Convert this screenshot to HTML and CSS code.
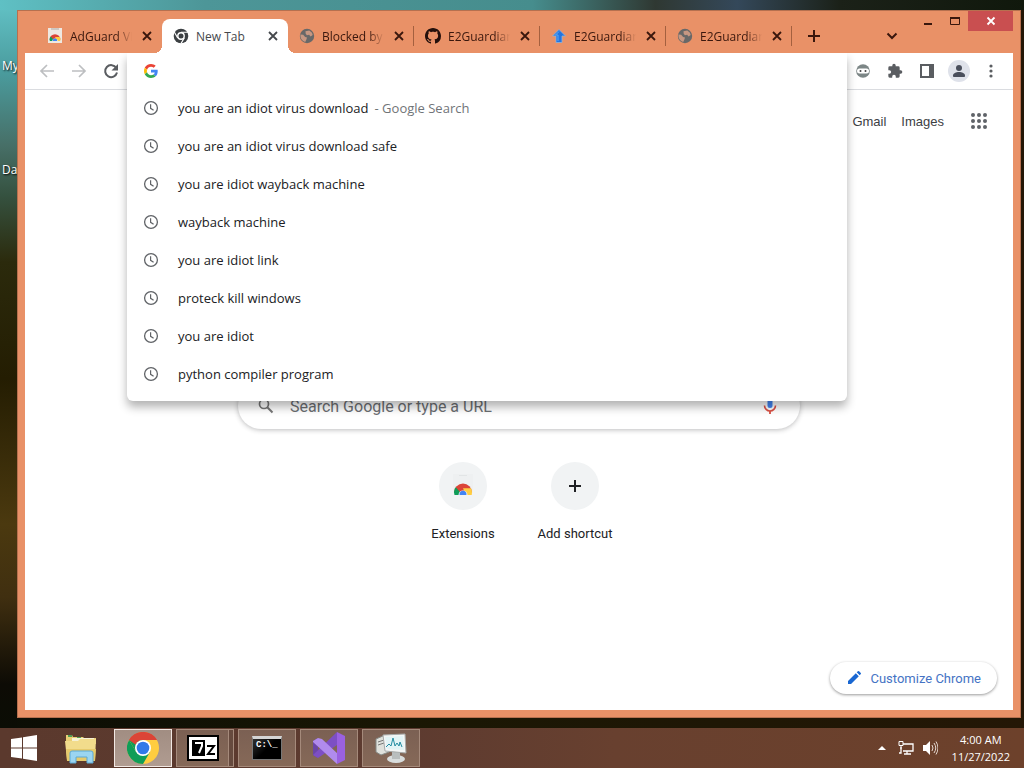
FILE: index.html
```html
<!DOCTYPE html>
<html lang="en">
<head>
  <meta charset="UTF-8" />
  <meta name="viewport" content="width=device-width, initial-scale=1" />
  <title>New Tab</title>
  <link rel="stylesheet" href="styles.css">
</head>
<body>
  <!-- Shared icons -->
  <svg class="sprite" aria-hidden="true">
    <symbol id="i-close" viewBox="0 0 16 16"><path d="M4 4l8 8M12 4l-8 8" fill="none" stroke="currentColor" stroke-width="1.8"/></symbol>
    <symbol id="i-plus" viewBox="0 0 16 16"><path d="M8 2v12M2 8h12" fill="none" stroke="currentColor" stroke-width="2"/></symbol>
    <symbol id="i-clock" viewBox="0 0 16 16"><circle cx="8" cy="8" r="6.4" fill="none" stroke="currentColor" stroke-width="1.3"/><path d="M7.6 4.2v4.1l3 1.9" fill="none" stroke="currentColor" stroke-width="1.2"/></symbol>
    <symbol id="i-globe" viewBox="0 0 16 16"><circle cx="8" cy="8" r="7.2" fill="#686868"/><path d="M1.500 6.500l2.700.3 1.900 2.200 1.900.4-.6 2.100-1.200 2.500C3.500 13.200 1 10.500 1.500 6.500zM6.500 3.200l3.800-.8 2.700 2.400.7 2.300-2.100 1.500-1.500-1.800-2.200.4-1.200-1.500z" fill="#c79782"/></symbol>
    <symbol id="i-store" viewBox="0 0 20 20"><path d="M1 13.500a9 9 0 0 1 18 0l-4.500 1.500h-9z" fill="#db4437"/><path d="M1 13.500c0-2 .7-3.800 1.800-5.200L7 13v3H1.500z" fill="#0f9d58"/><path d="M10 9.300h8c.7 1.300 1 2.700 1 4.200l-.3 2.500H13z" fill="#ffcd40"/><path d="M5.500 16a4.500 4.500 0 1 1 9 0z" fill="#f1f1f1"/><path d="M6.600 16a3.500 3.500 0 1 1 6.800 0z" fill="#4285f4"/></symbol>
    <symbol id="i-github" viewBox="0 0 16 16"><path fill="#24100c" d="M8 0C3.580 0 0 3.580 0 8c0 3.540 2.290 6.530 5.470 7.590.4.070.55-.17.55-.38 0-.19-.01-.82-.01-1.490-2.010.37-2.530-.49-2.690-.94-.09-.23-.48-.94-.82-1.130-.28-.15-.68-.52-.01-.53.63-.01 1.080.58 1.230.82.72 1.210 1.870.87 2.330.66.07-.52.28-.87.51-1.070-1.780-.2-3.640-.89-3.640-3.950 0-.87.31-1.590.82-2.150-.08-.2-.36-1.020.08-2.120 0 0 .67-.21 2.200.82.64-.18 1.320-.27 2-.27s1.360.09 2 .27c1.530-1.040 2.200-.82 2.200-.82.44 1.100.16 1.920.08 2.120.51.56.82 1.270.82 2.150 0 3.070-1.870 3.750-3.650 3.950.29.25.54.73.54 1.480 0 1.070-.01 1.930-.01 2.200 0 .21.15.46.55.38A8.010 8.010 0 0 0 16 8c0-4.420-3.580-8-8-8z"/></symbol>
  </svg>

  <main class="desktop">
    <span class="desktop-label desktop-label-pc">My</span>
    <span class="desktop-label desktop-label-da">Da</span>

    <div class="window">
      <header class="titlebar">
        <div class="tabs">
          <div class="tab no-line">
            <svg class="favicon" viewBox="0 0 16 16"><path d="M1 0h14v15H1z" fill="#eee8e2"/><path d="M4 0h8v2H4z" fill="#cfc8c2"/><use href="#i-store" x="2" y="3" width="12" height="13"/></svg>
            <button class="tab-title">AdGuard VPN</button>
            <button class="tab-close" aria-label="Close AdGuard VPN"><svg><use href="#i-close"/></svg></button>
          </div>
          <div class="tab active">
            <svg class="favicon" viewBox="0 0 16 16"><circle cx="8" cy="8" r="7.300" fill="#3c4043"/><path d="M8 4.200h7M4.700 9.900L1.300 3.900M11.300 9.900l-3.500 6" stroke="#fff" stroke-width="1.100"/><circle cx="8" cy="8" r="3.900" fill="#fff"/><circle cx="8" cy="8" r="2.500" fill="#3c4043"/></svg>
            <button class="tab-title">New Tab</button>
            <button class="tab-close" aria-label="Close New Tab"><svg><use href="#i-close"/></svg></button>
          </div>
          <div class="tab">
            <svg class="favicon"><use href="#i-globe"/></svg>
            <button class="tab-title">Blocked by</button>
            <button class="tab-close" aria-label="Close Blocked by"><svg><use href="#i-close"/></svg></button>
          </div>
          <div class="tab">
            <svg class="favicon"><use href="#i-github"/></svg>
            <button class="tab-title">E2Guardian</button>
            <button class="tab-close" aria-label="Close E2Guardian"><svg><use href="#i-close"/></svg></button>
          </div>
          <div class="tab">
            <svg class="favicon" viewBox="0 0 16 16"><path d="M8 1.500L14.500 8H11v6.500H5V8H1.500z" fill="#2374e0" stroke="#8fb4dc" stroke-width=".8"/><path d="M8 3.500L4.500 7H7v6" fill="none" stroke="#5ba8f8"/></svg>
            <button class="tab-title">E2Guardian</button>
            <button class="tab-close" aria-label="Close E2Guardian"><svg><use href="#i-close"/></svg></button>
          </div>
          <div class="tab">
            <svg class="favicon"><use href="#i-globe"/></svg>
            <button class="tab-title">E2Guardian</button>
            <button class="tab-close" aria-label="Close E2Guardian"><svg><use href="#i-close"/></svg></button>
          </div>
        </div>
        <button class="strip-button" aria-label="New tab"><svg><use href="#i-plus"/></svg></button>
        <button class="strip-button tab-search" aria-label="Search tabs"><svg viewBox="0 0 16 16"><path d="M3.500 5.500L8 10l4.500-4.500" fill="none" stroke="currentColor" stroke-width="2"/></svg></button>
        <div class="window-controls">
          <button aria-label="Minimize"><svg viewBox="0 0 12 12"><path d="M2 9h8" stroke="currentColor" stroke-width="2"/></svg></button>
          <button aria-label="Maximize"><svg viewBox="0 0 12 12"><path d="M1.500 2.500h9v7h-9z" fill="none" stroke="currentColor"/><path d="M1 3h10" stroke="currentColor" stroke-width="2"/></svg></button>
          <button class="window-close" aria-label="Close window"><svg viewBox="0 0 12 12"><path d="M2.500 2.500l7 7M9.500 2.500l-7 7" stroke="currentColor" stroke-width="1.800"/></svg></button>
        </div>
      </header>

      <div class="toolbar">
        <div class="nav-buttons">
          <button class="dim" aria-label="Back"><svg viewBox="0 0 16 16"><path d="M15 8H2M8 2L2 8l6 6" fill="none" stroke="currentColor" stroke-width="1.700"/></svg></button>
          <button class="dim" aria-label="Forward"><svg viewBox="0 0 16 16"><path d="M1 8h13M8 2l6 6-6 6" fill="none" stroke="currentColor" stroke-width="1.700"/></svg></button>
          <button aria-label="Reload"><svg viewBox="0 0 16 16"><path d="M13.300 5A6 6 0 1 0 14 9.500" fill="none" stroke="currentColor" stroke-width="2"/><path d="M15 1v6.500H8.500z" fill="currentColor"/></svg></button>
        </div>

        <div class="omnibox">
          <div class="omnibox-popup">
            <div class="omnibox-row">
              <svg class="google-g" viewBox="0 0 48 48"><path fill="#ea4335" d="M24 9.500c3.540 0 6.710 1.220 9.210 3.600l6.850-6.850C35.900 2.380 30.470 0 24 0 14.620 0 6.510 5.380 2.560 13.220l7.980 6.190C12.430 13.720 17.740 9.500 24 9.500z"/><path fill="#4285f4" d="M46.980 24.550c0-1.570-.15-3.090-.38-4.550H24v9.020h12.940c-.58 2.960-2.260 5.480-4.780 7.180l7.730 6c4.510-4.180 7.090-10.360 7.090-17.650z"/><path fill="#fbbc05" d="M10.530 28.590A14.500 14.500 0 0 1 9.770 24c0-1.600.27-3.140.76-4.590l-7.980-6.190A23.900 23.900 0 0 0 0 24c0 3.880.92 7.540 2.560 10.780z"/><path fill="#34a853" d="M24 48c6.480 0 11.930-2.130 15.890-5.810l-7.730-6c-2.150 1.450-4.920 2.300-8.160 2.300-6.260 0-11.570-4.220-13.470-9.910l-7.980 6.190C6.510 42.620 14.620 48 24 48z"/></svg>
              <input type="text" aria-label="Address and search bar">
            </div>
            <ul class="suggestions">
              <li><a href="#"><svg><use href="#i-clock"/></svg><span>you are an idiot virus download</span><span class="hint">- Google Search</span></a></li>
              <li><a href="#"><svg><use href="#i-clock"/></svg><span>you are an idiot virus download safe</span></a></li>
              <li><a href="#"><svg><use href="#i-clock"/></svg><span>you are idiot wayback machine</span></a></li>
              <li><a href="#"><svg><use href="#i-clock"/></svg><span>wayback machine</span></a></li>
              <li><a href="#"><svg><use href="#i-clock"/></svg><span>you are idiot link</span></a></li>
              <li><a href="#"><svg><use href="#i-clock"/></svg><span>proteck kill windows</span></a></li>
              <li><a href="#"><svg><use href="#i-clock"/></svg><span>you are idiot</span></a></li>
              <li><a href="#"><svg><use href="#i-clock"/></svg><span>python compiler program</span></a></li>
            </ul>
          </div>
        </div>

        <div class="toolbar-actions">
          <button aria-label="Ninja extension"><svg viewBox="0 0 16 16"><circle cx="8" cy="8" r="6.800" fill="#7c8686"/><rect x="2" y="5.500" width="12" height="5" rx="2.500" fill="#fff"/><circle cx="5.500" cy="8" r="1" fill="#444"/><circle cx="10.500" cy="8" r="1" fill="#444"/></svg></button>
          <button aria-label="Extensions"><svg viewBox="0 0 24 24"><path fill="currentColor" d="M20.500 11H19V7a2 2 0 0 0-2-2h-4V3.500a2.500 2.500 0 0 0-5 0V5H4a2 2 0 0 0-2 2v3.800h1.500a2.700 2.700 0 0 1 0 5.400H2V20a2 2 0 0 0 2 2h3.800v-1.500a2.700 2.700 0 0 1 5.400 0V22H17a2 2 0 0 0 2-2v-4h1.500a2.500 2.500 0 0 0 0-5z"/></svg></button>
          <button aria-label="Side panel"><svg viewBox="0 0 16 16"><path d="M2 2h12v12H2z" fill="none" stroke="currentColor" stroke-width="2"/><path d="M10 2h4v12h-4z" fill="currentColor"/></svg></button>
          <button class="profile" aria-label="Profile"><svg viewBox="0 0 16 16"><circle cx="8" cy="5" r="3" fill="currentColor"/><path d="M2 14v-1.500c0-2.200 3-3.500 6-3.500s6 1.300 6 3.500V14z" fill="currentColor"/></svg></button>
          <button aria-label="Menu"><svg viewBox="0 0 16 16"><g fill="currentColor"><circle cx="8" cy="3" r="1.600"/><circle cx="8" cy="8" r="1.600"/><circle cx="8" cy="13" r="1.600"/></g></svg></button>
        </div>
      </div>

      <section class="page">
        <nav class="page-nav">
          <a href="#">Gmail</a>
          <a href="#">Images</a>
          <button aria-label="Google apps"><svg viewBox="0 0 18 18"><g fill="#5f6368"><circle cx="3" cy="3" r="2"/><circle cx="9" cy="3" r="2"/><circle cx="15" cy="3" r="2"/><circle cx="3" cy="9" r="2"/><circle cx="9" cy="9" r="2"/><circle cx="15" cy="9" r="2"/><circle cx="3" cy="15" r="2"/><circle cx="9" cy="15" r="2"/><circle cx="15" cy="15" r="2"/></g></svg></button>
        </nav>

        <form class="search">
          <svg viewBox="0 0 16 16"><circle cx="6" cy="6" r="4.500" fill="none" stroke="#777" stroke-width="1.700"/><path d="M9.300 9.300l5.200 5.200" stroke="#777" stroke-width="2"/></svg>
          <input type="text" placeholder="Search Google or type a URL" aria-label="Search Google or type a URL">
          <button type="button" aria-label="Search by voice"><svg viewBox="0 0 16 16"><rect x="5.500" y="0" width="5" height="10" rx="2.500" fill="#4285f4"/><path d="M2.500 7.500a5.500 5.500 0 0 0 11 0" fill="none" stroke="#db5044" stroke-width="1.600"/><path d="M8 13v3" stroke="#db5044" stroke-width="1.800"/></svg></button>
        </form>

        <div class="shortcuts">
          <a class="shortcut" href="#">
            <span class="shortcut-icon"><svg class="store" viewBox="0 0 24 24"><path d="M2 0h20v19H2z" fill="#eef0f1"/><path d="M8 1h8v1H8z" fill="#e2e5e6"/><use href="#i-store" x="2" y="5" width="20" height="20"/></svg></span>
            Extensions
          </a>
          <a class="shortcut" href="#">
            <span class="shortcut-icon"><svg><use href="#i-plus"/></svg></span>
            Add shortcut
          </a>
        </div>

        <button class="customize">
          <svg viewBox="0 0 16 16"><path d="M2 14v-3l7.800-7.800 3 3L5 14zM10.700 2.300l1.200-1.100q.6-.5 1.200 0l1.700 1.700q.5.600 0 1.200l-1.100 1.200z" fill="#1967d2"/></svg>
          Customize Chrome
        </button>
      </section>
    </div>
  </main>

  <footer class="taskbar">
    <button class="start" aria-label="Start"><svg viewBox="0 0 26 26"><path fill="#fff" d="M0 4l11-1.500v10H0zM12 2.300L26 0v12.500H12zM0 13.500h11v10L0 22zM12 13.500h14V26l-14-2.300z"/></svg></button>
    <button class="task plain" aria-label="File Explorer"><svg viewBox="0 0 32 32"><path d="M1 3h6l1 2h10l1 1h12v6H1z" fill="#e9cf76"/><path d="M3 3h4v2H3zM12 5h4v2h-4z" fill="#4f9b54"/><path d="M20 6h5v2h-5z" fill="#c65a49"/><path d="M7 6h22v4H7z" fill="#f6f1d4"/><path d="M0 9h13l2-2h16l-1 21H2z" fill="#f2dc8c"/><path d="M1 17h30l-1 12H2z" fill="#e6ca6c"/><path d="M5 31V21q0-2 2-2h19q2 0 2 2v10h-6v-6H11v6z" fill="#9bd5f1" stroke="#5da9d4"/></svg></button>
    <button class="task current" aria-label="Google Chrome"><svg viewBox="0 0 48 48"><circle cx="24" cy="24" r="24" fill="#ffcd40"/><path d="M24 24L3.200 12A24 24 0 0 1 44.800 12H24z" fill="#db4437"/><path d="M3.200 12A24 24 0 0 0 24 48l10.400-18L24 24 13.600 30z" fill="#0f9d58"/><path d="M3.200 12l10.400 18L24 24V12z" fill="#0f9d58"/><path d="M3.200 12A24 24 0 0 1 44.800 12H24A12 12 0 0 0 13 19z" fill="#db4437"/><circle cx="24" cy="24" r="12" fill="#fff"/><circle cx="24" cy="24" r="9.500" fill="#3079e8"/></svg></button>
    <button class="task stacked" aria-label="7-Zip"><svg viewBox="0 0 32 26"><path d="M1 1h30v24H1z" fill="#fff" stroke="#000" stroke-width="2"/><path d="M5 5h13v16H5z" fill="#000"/><path d="M8 8h7v3l-3 7" fill="none" stroke="#fff" stroke-width="2"/><path d="M20 11h7l-6 8h7" fill="none" stroke="#000" stroke-width="2"/></svg></button>
    <button class="task" aria-label="Command Prompt"><span class="console">C:\_</span></button>
    <button class="task" aria-label="Visual Studio"><svg viewBox="0 0 32 32"><path d="M0 9l5-3v20l-5-3z" fill="#6b46a8"/><path d="M24 0v13L5 26l-5-3z" fill="#7d4fc4"/><path d="M5 6l4 1 17 16-2 9L0 10V9z" fill="#b08bed"/><path d="M24 0l8 4v24l-8 4z" fill="#9a61e0"/></svg></button>
    <button class="task" aria-label="System monitor"><svg viewBox="0 0 32 32"><path d="M1 7l9-4 4 17-8 3-5-3z" fill="#dfe1dc" stroke="#858985"/><path d="M3 10l6-2M3 13l6-2" stroke="#777"/><ellipse cx="21" cy="27" rx="9" ry="4" fill="#d9dddd"/><path d="M17 19h8v8h-8z" fill="#b9bebe"/><path d="M8 3l22-1 1 19-21-2z" fill="#f4f6f6" stroke="#a6aaa9"/><path d="M10 5l18-1 1 14-17-1z" fill="#e2f4f6"/><path d="M11 15l3-3 2 2 2-8 2 8 2-3 2 3 1-4 2 5" fill="none" stroke="#238ca2"/></svg></button>

    <div class="tray">
      <button aria-label="Show hidden icons"><svg viewBox="0 0 16 16"><path d="M4 10l4-4 4 4z" fill="#fff"/></svg></button>
      <button aria-label="Network"><svg viewBox="0 0 16 16"><path d="M5 4h10v7H5M9 11v3M6 14h7M3 7v6H1" fill="none" stroke="#fff" stroke-width="1.300"/><path d="M1 1.500h4v4H1z" fill="#684331" stroke="#fff"/><path d="M3 5v4" stroke="#fff"/></svg></button>
      <button aria-label="Volume"><svg viewBox="0 0 16 16"><path d="M1 5h3l4-4v14l-4-4H1z" fill="#fff"/><path d="M10 5q2 3 0 6M12 3q3.500 5 0 10M14 1.500q4 6.500 0 13" fill="none" stroke="#e5d8d0"/></svg></button>
      <time class="clock" datetime="2022-11-27T04:00"><span>4:00 AM</span><span>11/27/2022</span></time>
    </div>
  </footer>
</body>
</html>
```
FILE: styles.css
```css
*, *::before, *::after { box-sizing: border-box; }
body {
  margin: 0;
  min-height: 100vh;
  display: flex;
  flex-direction: column;
  font-family: 'Open Sans', 'Noto Sans', sans-serif;
  font-size: 12px;
  color: #202124;
  background: #171004;
}
button {
  display: flex;
  align-items: center;
  justify-content: center;
  padding: 0;
  border: none;
  background: none;
  color: inherit;
  font: inherit;
  cursor: pointer;
}
input {
  min-width: 0;
  flex: 1;
  border: none;
  outline: none;
  background: none;
  font: inherit;
}
a {
  color: inherit;
  text-decoration: none;
}
svg {
  width: 16px;
  height: 16px;
  flex: none;
}
.sprite {
  position: absolute;
  width: 0;
  height: 0;
}

/* Desktop */
.desktop {
  flex: 1;
  position: relative;
  display: flex;
  padding: 10px 3px 10px 17px;
  background:
    linear-gradient(to right, #5fc0c4 0, #4d9698 20%, #468d8d 52%, #2f3832 64%, #34485a 72%, #1b2118 82%, #10180c 100%) top / 100% 10px no-repeat,
    linear-gradient(to bottom, #63c3c7 0, #4a9b9d 10%, #476f67 20%, #35513f 27%, #2b2a0c 36%, #241d02 52%, #4b390f 72%, #402f10 82%, #0d0b05 94%, #0b0d05 100%) left / 17px 100% no-repeat,
    linear-gradient(to right, #0b0d05, #1a1704 40%, #241706 100%);
}
.desktop-label {
  position: absolute;
  left: 2px;
  line-height: 16px;
  color: #fff;
  text-shadow: 1px 1px 2px #000;
}
.desktop-label-pc { top: 58px; }
.desktop-label-da { top: 162px; }

/* Browser window */
.window {
  flex: 1;
  position: relative;
  min-width: 0;
  display: flex;
  flex-direction: column;
  padding: 0 7px 7px;
  background: #e99167;
  border: 1px solid #b6704f;
}
.titlebar {
  display: flex;
  height: 42px;
  padding-left: 11px;
  color: #3a170d;
}
.tabs {
  display: flex;
  align-self: flex-end;
}
.tab {
  position: relative;
  display: flex;
  align-items: center;
  width: 126px;
  height: 34px;
  padding: 0 7px 0 11px;
  gap: 7px;
}
.tab::after {
  content: '';
  position: absolute;
  right: 0;
  top: 7px;
  width: 1px;
  height: 20px;
  background: #a4603f;
}
.tab-title {
  flex: 1;
  min-width: 0;
  justify-content: flex-start;
  overflow: hidden;
  white-space: nowrap;
  -webkit-mask-image: linear-gradient(to right, #000 75%, transparent);
  mask-image: linear-gradient(to right, #000 75%, transparent);
}
.tab.no-line::after { display: none; }
.tab.active {
  background: #fff;
  border-radius: 8px 8px 0 0;
  color: #45484c;
}
.tab.active .tab-title {
  -webkit-mask-image: none;
  mask-image: none;
}
.tab.active::before,
.tab.active::after {
  content: '';
  position: absolute;
  top: auto;
  bottom: 0;
  width: 8px;
  height: 8px;
}
.tab.active::before {
  left: -8px;
  background: radial-gradient(circle at 0 0, transparent 8px, #fff 8px);
}
.tab.active::after {
  right: -8px;
  background: radial-gradient(circle at 100% 0, transparent 8px, #fff 8px);
}
.strip-button {
  align-self: flex-end;
  width: 28px;
  height: 34px;
  margin-left: 8px;
}
.tab-search {
  margin-left: auto;
  margin-right: 8px;
}
.window-controls {
  display: flex;
  align-self: flex-start;
}
.window-controls button {
  width: 27px;
  height: 20px;
}
.window-controls svg {
  width: 12px;
  height: 12px;
}
.window-controls .window-close {
  width: 45px;
  background: #c94f50;
  color: #fff;
}

/* Toolbar */
.toolbar {
  display: flex;
  height: 37px;
  background: #fff;
  border-bottom: 1px solid #dadce0;
  color: #5a5d61;
}
.nav-buttons {
  display: flex;
  align-items: center;
  width: 102px;
  padding-left: 6px;
}
.nav-buttons button {
  width: 32px;
  height: 32px;
}
.nav-buttons .dim { color: #bdbfc1; }
.omnibox {
  flex: 1;
  position: relative;
}
.omnibox-popup {
  position: absolute;
  top: 0;
  left: 0;
  right: 0;
  z-index: 10;
  padding-bottom: 8px;
  background: #fff;
  border-radius: 0 0 6px 6px;
  box-shadow: 0 6px 10px rgba(0, 0, 0, 0.3);
  clip-path: inset(0 -12px -24px -12px);
  color: #202124;
  font-size: 13px;
}
.omnibox-row {
  display: flex;
  align-items: center;
  gap: 20px;
  height: 36px;
  padding: 0 17px;
}
.google-g {
  width: 14px;
  height: 14px;
}
.suggestions {
  list-style: none;
  margin: 0;
  padding: 0;
}
.suggestions a {
  display: flex;
  align-items: center;
  height: 38px;
  padding: 0 16px;
}
.suggestions svg {
  margin-right: 19px;
  color: #606367;
}
.suggestions .hint {
  margin-left: 6px;
  color: #707478;
}
.toolbar-actions {
  display: flex;
  align-items: center;
  width: 166px;
}
.toolbar-actions button {
  width: 32px;
  height: 32px;
}
.toolbar-actions .profile svg {
  width: 22px;
  height: 22px;
  padding: 3px;
  border-radius: 50%;
  background: #dfe2ea;
  color: #4a4f5c;
}

/* New tab page */
.page {
  flex: 1;
  position: relative;
  display: flex;
  flex-direction: column;
  align-items: center;
  background: #fff;
  font-family: Roboto, 'Liberation Sans', sans-serif;
  font-size: 13px;
}
.page-nav {
  align-self: stretch;
  display: flex;
  align-items: center;
  justify-content: flex-end;
  gap: 15px;
  height: 62px;
  padding-right: 22px;
  font-family: 'Liberation Sans', Arial, sans-serif;
  color: #3c4043;
}
.page-nav button {
  width: 24px;
  height: 24px;
  margin-left: 8px;
}
.page-nav svg {
  width: 18px;
  height: 18px;
}
.search {
  display: flex;
  align-items: center;
  width: 562px;
  max-width: 90%;
  height: 46px;
  margin-top: 231px;
  padding: 0 22px 0 20px;
  border-radius: 23px;
  box-shadow: 0 1px 5px rgba(32, 33, 36, 0.3);
}
.search input {
  padding: 0 16px;
  font-size: 16px;
}
.search input::placeholder { color: #6b6e72; }
.shortcuts {
  display: flex;
  margin-top: 33px;
}
.shortcut {
  display: flex;
  flex-direction: column;
  align-items: center;
  gap: 16px;
  width: 112px;
  line-height: 16px;
}
.shortcut-icon {
  display: flex;
  align-items: center;
  justify-content: center;
  width: 48px;
  height: 48px;
  border-radius: 50%;
  background: #f1f3f4;
}
.shortcut-icon .store {
  width: 24px;
  height: 24px;
}
.customize {
  position: absolute;
  right: 16px;
  bottom: 16px;
  gap: 8px;
  height: 32px;
  padding: 0 16px;
  border-radius: 16px;
  background: #fff;
  box-shadow: 0 1px 3px rgba(0, 0, 0, 0.4);
  color: #4573c4;
}

/* Taskbar */
.taskbar {
  display: flex;
  align-items: center;
  gap: 4px;
  height: 40px;
  background: linear-gradient(to right, #5b392d, #5d3b30 40%, #68402f 60%, #6d412b 100%);
}
.start {
  width: 48px;
  height: 40px;
}
.start svg {
  width: 26px;
  height: 26px;
}
.task {
  position: relative;
  width: 58px;
  height: 38px;
  border: 1px solid #a58a7b;
  background: linear-gradient(#7b6053, #866958);
}
.task svg {
  width: 32px;
  height: 32px;
}
.task.plain {
  border-color: transparent;
  background: none;
}
.task.current {
  border-color: #f2e8e3;
  background: linear-gradient(#a18d82, #b09c91);
}
.task.stacked { padding-right: 5px; }
.task.stacked::after {
  content: '';
  position: absolute;
  top: 0;
  bottom: 0;
  right: 0;
  width: 5px;
  border-left: 1px solid #a58a7b;
  background: #664a3e;
}
.console {
  width: 30px;
  height: 24px;
  padding-left: 3px;
  border: 1px solid #777;
  border-top: 3px solid #d5d5d5;
  background: linear-gradient(135deg, #303030, #000 50%);
  color: #fff;
  font: bold 9px/12px 'Liberation Mono', monospace;
  text-align: left;
}
.tray {
  display: flex;
  align-items: center;
  gap: 8px;
  margin-left: auto;
  padding-right: 14px;
  color: #fff;
}
.clock {
  display: flex;
  flex-direction: column;
  align-items: center;
  margin-left: 6px;
  font-size: 11px;
  line-height: 17px;
}
```
